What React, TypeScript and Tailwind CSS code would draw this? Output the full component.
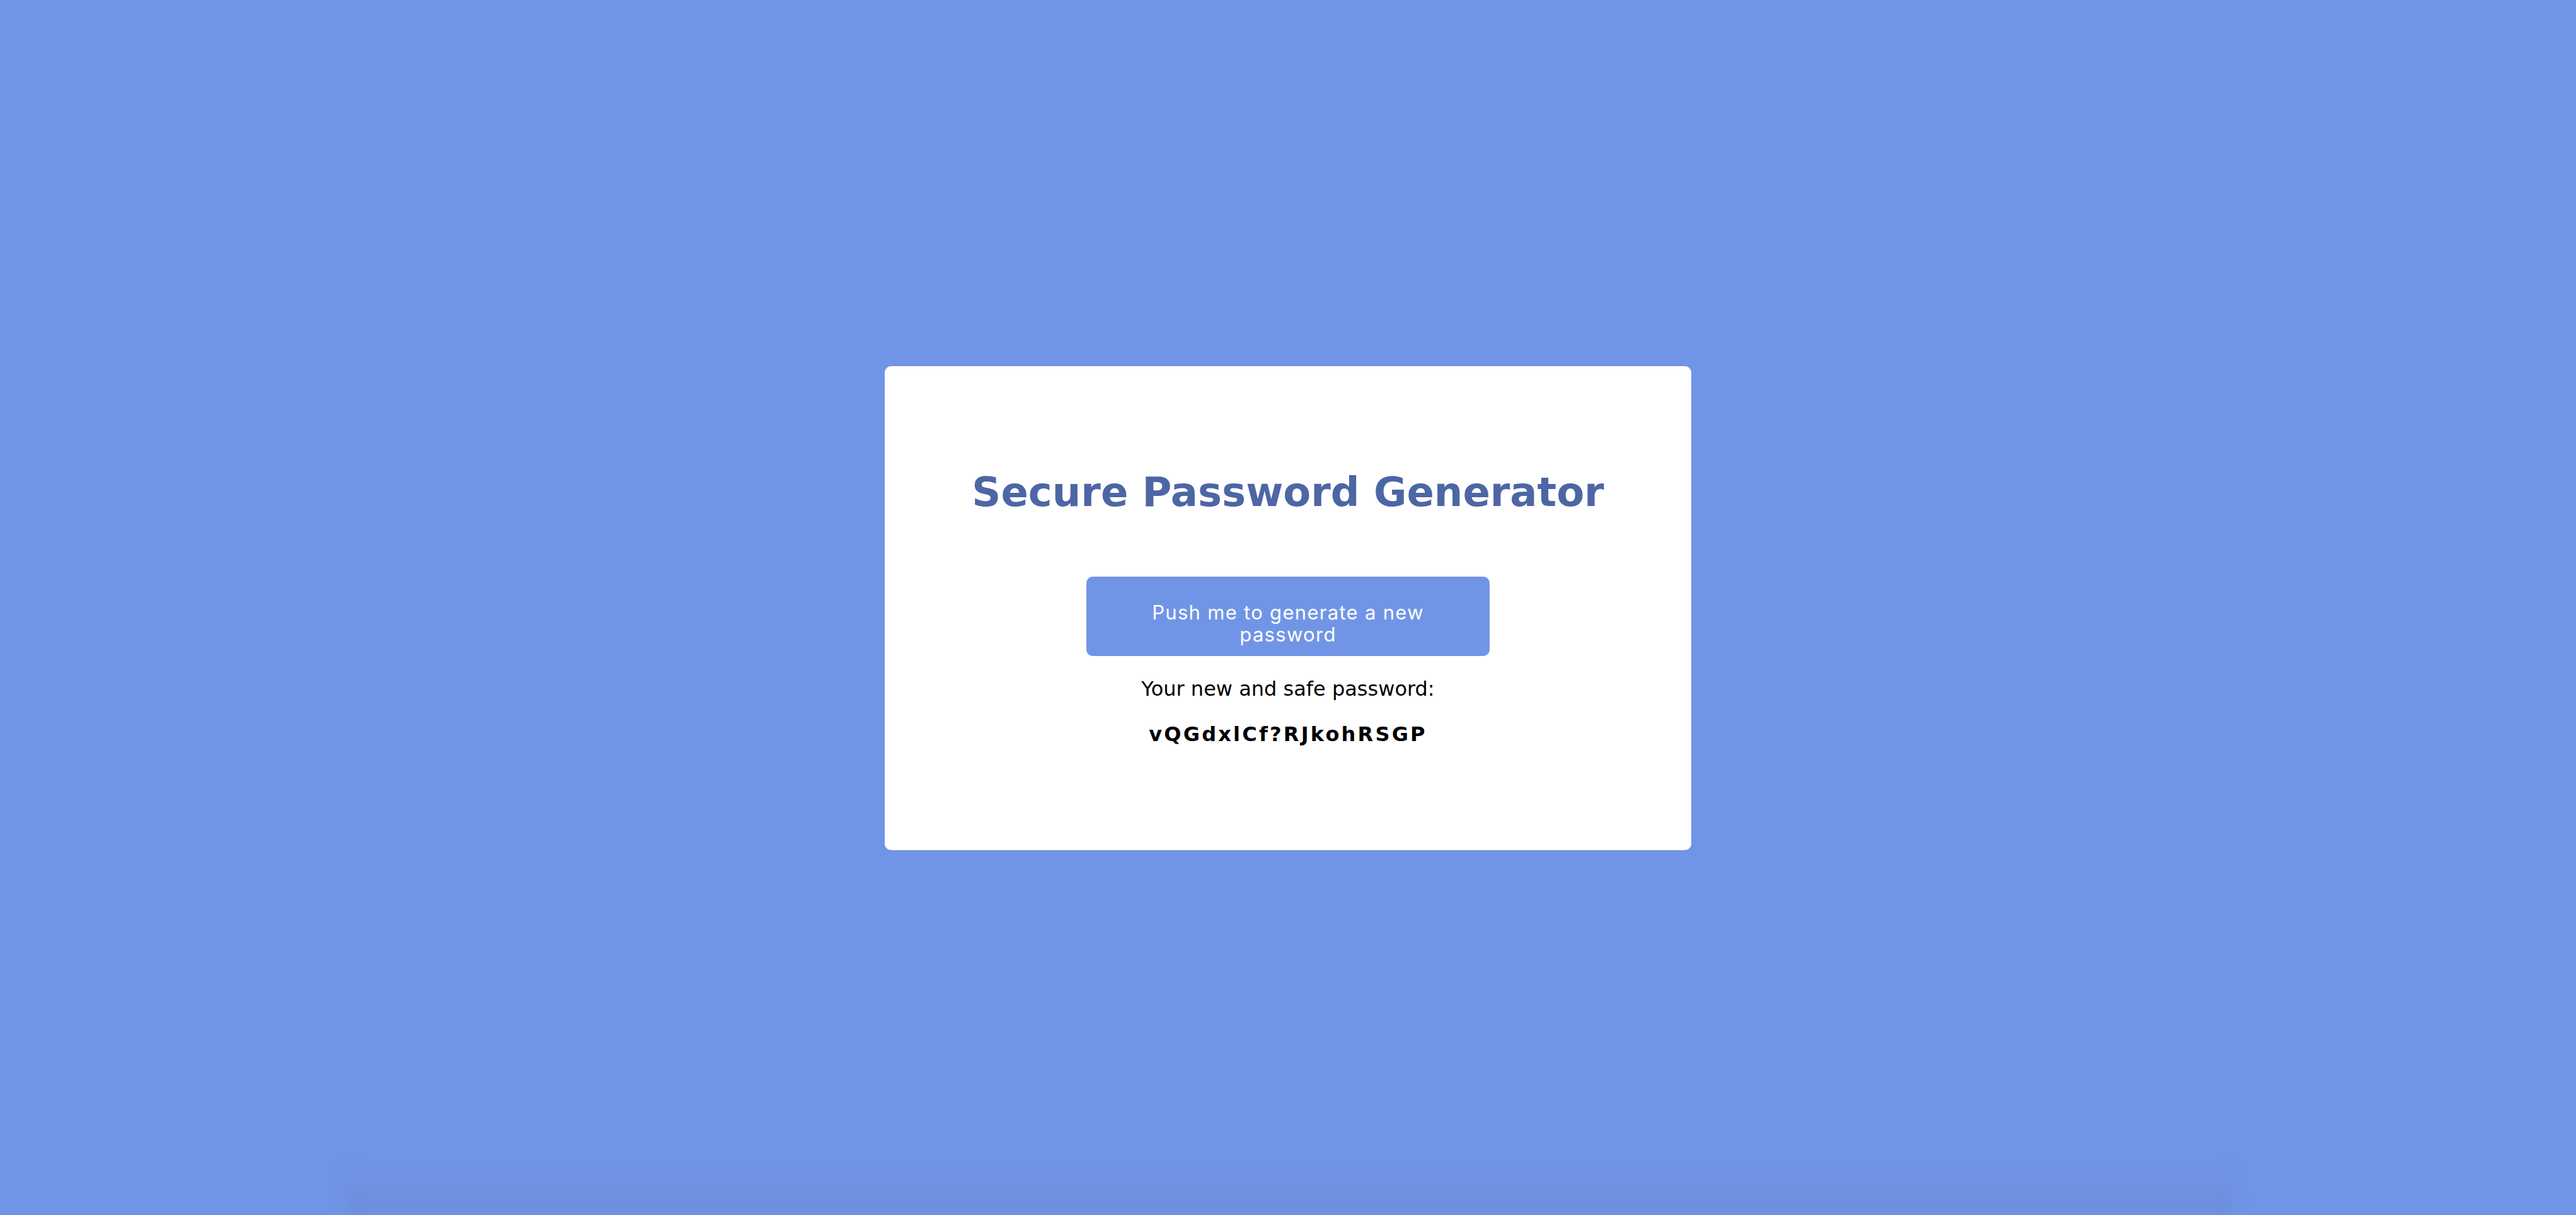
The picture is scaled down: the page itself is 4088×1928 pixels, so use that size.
import { useState } from "react";

const CHARS = "abcdefghijklmnopqrstuvwxyzABCDEFGHIJKLMNOPQRSTUVWXYZ?!";

const makePassword = () => {
    let out = "";
    for (let i = 0; i < 19; i++) {
        out += CHARS[Math.floor(Math.random() * CHARS.length)];
    }
    return out;
};

export default function App() {
    const [password, setPassword] = useState("vQGdxlCf?RJkohRSGP");

    return (
        <div className="relative min-h-screen bg-[#7195e6] flex items-center justify-center overflow-hidden font-['Verdana','DejaVu_Sans',sans-serif]">
            <div className="w-[1280px] h-[768px] mt-[2px] bg-white rounded-[10px] flex flex-col items-center pt-[163px]">
                <h1 className="text-[64px] leading-[74px] font-bold text-[#4d66a4]">
                    Secure Password Generator
                </h1>
                <button
                    onClick={() => setPassword(makePassword())}
                    className="mt-[97px] w-[640px] pt-[39px] pb-[17px] px-[90px] rounded-[10px] bg-[#7195e6] text-white text-[31px] leading-[35px] font-['Inter',sans-serif] tracking-[1.3px]"
                >
                    Push me to generate a new password
                </button>
                <p className="mt-[34px] text-[32px] leading-[37px] text-black">
                    Your new and safe password:
                </p>
                <p className="mt-[35px] text-[32px] leading-[37px] font-bold text-black tracking-[3.2px]">
                    {password}
                </p>
            </div>
            <div className="pointer-events-none absolute bottom-0 left-[547px] w-[2998px] h-[80px] bg-gradient-to-b from-transparent to-[#6c8dda] blur-[10px]" />
        </div>
    );
}
